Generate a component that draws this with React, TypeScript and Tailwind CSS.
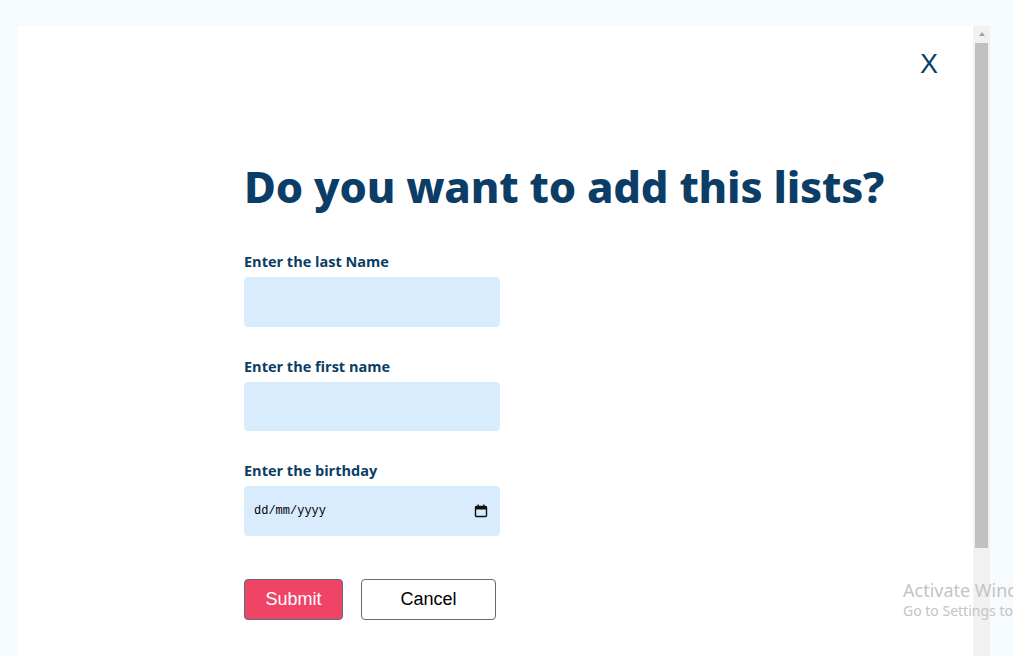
import React from "react";

function Field({ label, children }: { label: string; children?: React.ReactNode }) {
  return (
    <div className="flex flex-col">
      <label className="text-[14.5px] font-bold text-[#0b3d66] leading-[18px] mb-[6px]" style={{ fontFamily: '"Open Sans", "Noto Sans", sans-serif' }}>
        {label}
      </label>
      <div className="w-[256px] h-[49.5px] bg-[#d9ecfd] rounded-[4px] flex items-center px-[10px]">{children}</div>
    </div>
  );
}

export default function App() {
  return (
    <div className="w-[1013px] h-[656px] bg-[#f6fbff] overflow-hidden relative">
      <div className="flex h-full pl-[18px] pt-[26px]">
        <div className="w-[955px] h-full bg-white flex flex-col">
          <div className="flex justify-end pr-[35px] pt-[22px]">
            <span className="text-[27px] leading-[32px] text-[#0b3d66]" style={{ fontFamily: '"Liberation Sans", Arial, sans-serif' }}>X</span>
          </div>
          <div className="pl-[226px] pt-[80px]">
            <h1 className="text-[43.5px] font-extrabold text-[#0b3d66] leading-[52px] tracking-[-0.2px]" style={{ fontFamily: '"Noto Sans", sans-serif' }}>
              Do you want to add this lists?
            </h1>
            <div className="mt-[41px] flex flex-col gap-[31px]">
              <Field label="Enter the last Name" />
              <Field label="Enter the first name" />
              <Field label="Enter the birthday">
                <div className="flex w-full items-center justify-between">
                  <span className="text-[12px] text-black" style={{ fontFamily: '"Liberation Mono", monospace' }}>dd/mm/yyyy</span>
                  <svg width="14" height="14" viewBox="0 0 14 14" className="mr-[2px]">
                    <rect x="1.5" y="2.5" width="11" height="10" rx="1" fill="none" stroke="#111" strokeWidth="1.4" />
                    <rect x="1.5" y="2.5" width="11" height="3" fill="#111" />
                    <rect x="3.5" y="0.5" width="1.4" height="3" fill="#111" />
                    <rect x="9.1" y="0.5" width="1.4" height="3" fill="#111" />
                  </svg>
                </div>
              </Field>
            </div>
            <div className="mt-[43px] flex gap-[18px]" style={{ fontFamily: '"Liberation Sans", Arial, sans-serif' }}>
              <button className="w-[99px] h-[41px] bg-[#ef4466] border border-[#5f6b78] rounded-[4px] text-white text-[18px]">Submit</button>
              <button className="w-[135px] h-[41px] bg-white border border-[#5f6b78] rounded-[4px] text-black text-[18px]">Cancel</button>
            </div>
          </div>
        </div>
        <div className="w-[17px] h-full bg-[#f1f1f1] flex flex-col items-center">
          <svg width="8" height="6" viewBox="0 0 8 6" className="mt-[5px]">
            <polygon points="4,1 7,5 1,5" fill="#a3a3a3" />
          </svg>
          <div className="w-[13px] h-[505px] bg-[#c1c1c1] mt-[6px]" />
        </div>
      </div>
      <div className="absolute left-[903px] top-[579px] text-[#c4c4c4] whitespace-nowrap" style={{ fontFamily: '"Noto Sans", "Open Sans", sans-serif' }}>
        <div className="text-[18px] leading-[22px]">Activate Windows</div>
        <div className="text-[14px] leading-[20px]">Go to Settings to activate Windows.</div>
      </div>
    </div>
  );
}
